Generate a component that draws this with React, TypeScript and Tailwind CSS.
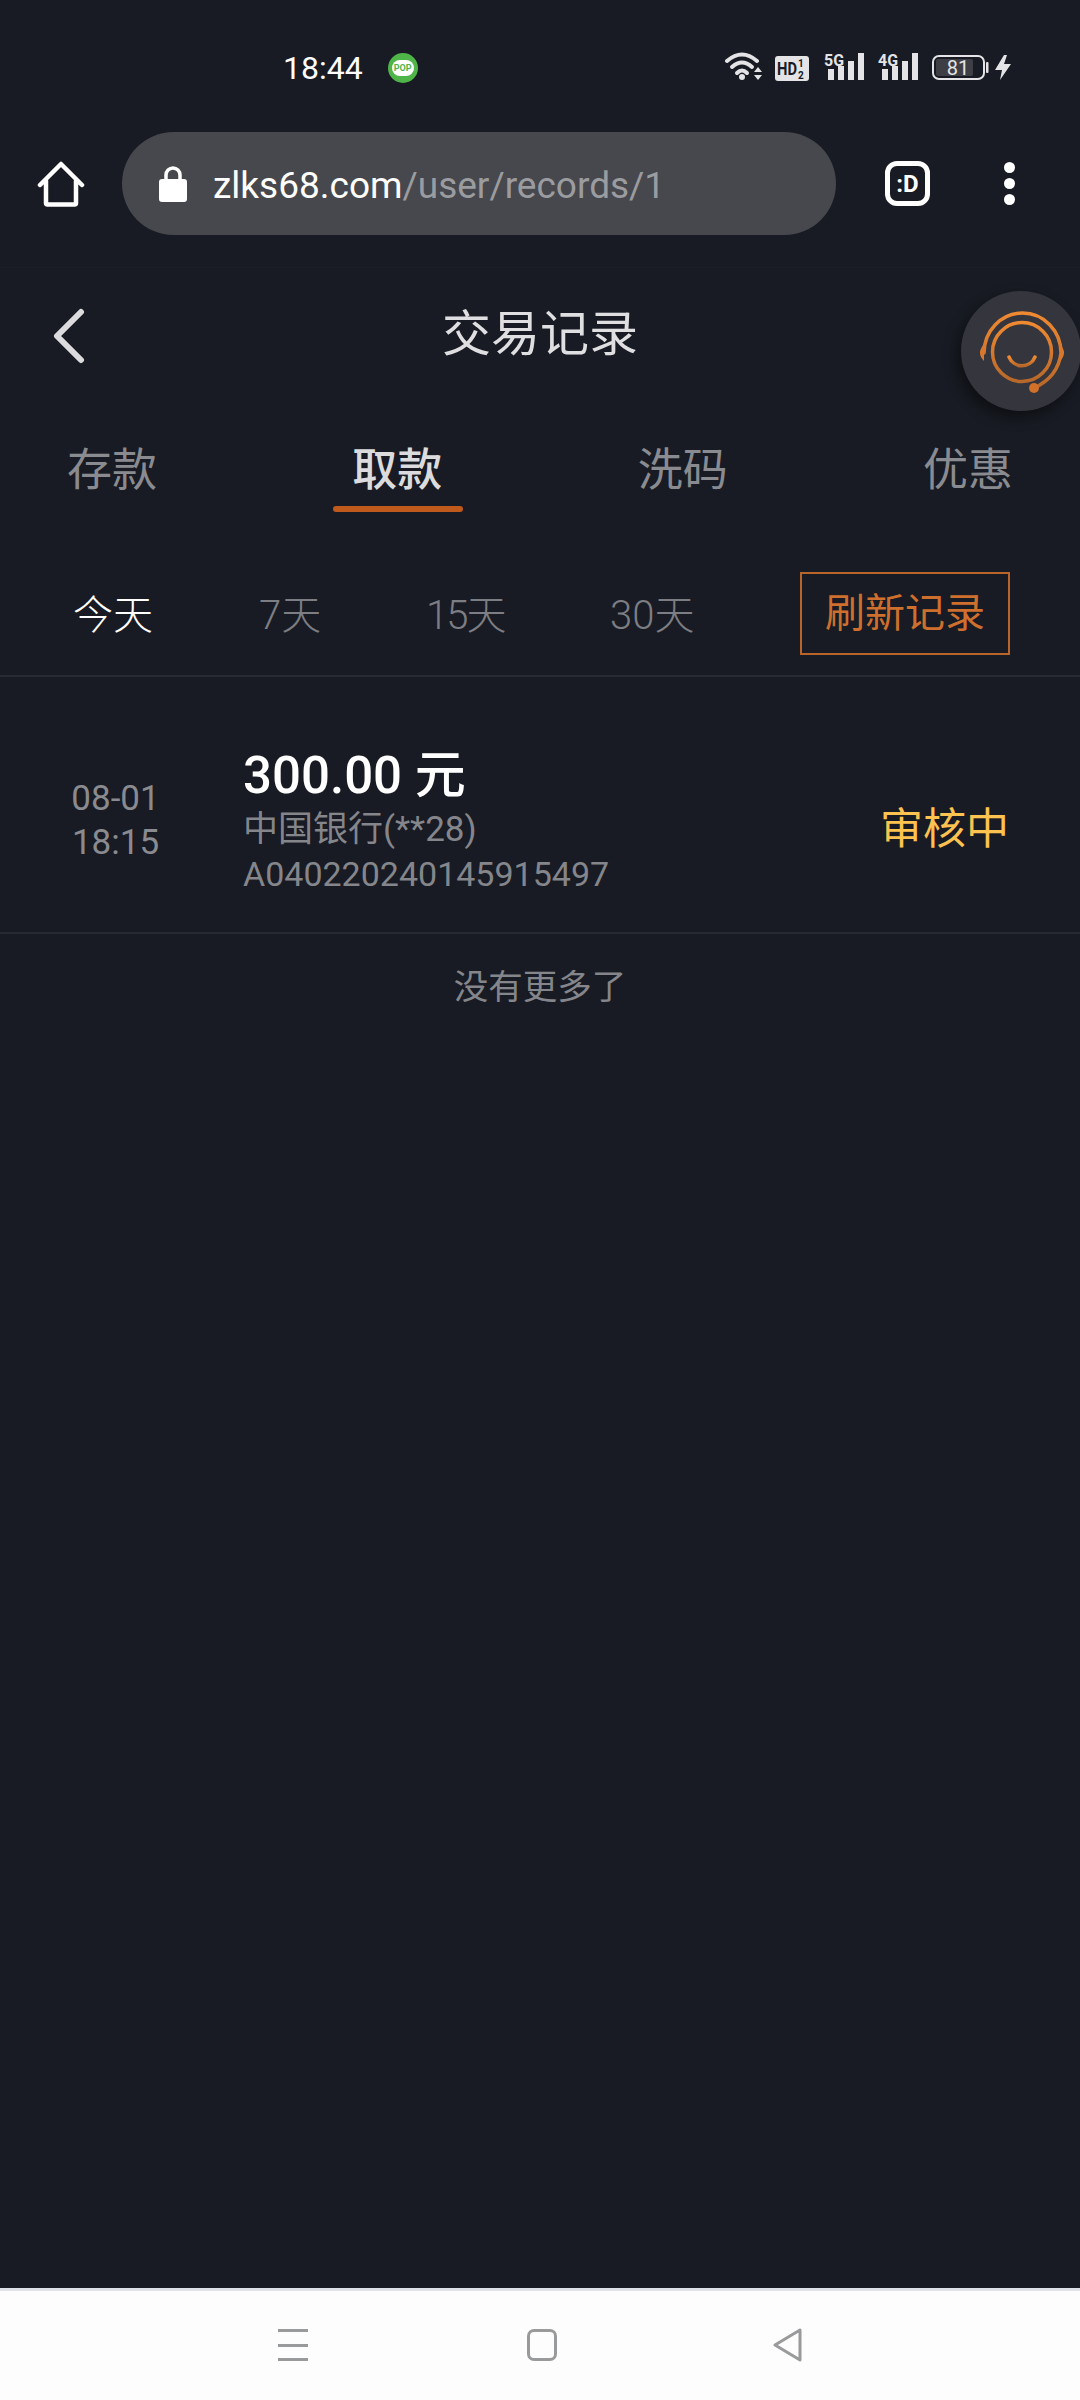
const fontStack = { fontFamily: '"Roboto", "Noto Sans CJK SC", sans-serif' };

function StatusIcons() {
  return (
    <svg width="292" height="34" viewBox="722 50 292 34" className="shrink-0">
      {/* wifi */}
      <g fill="none" stroke="#e4e4e6" strokeWidth="4" strokeLinecap="round">
        <path d="M727 61 Q742 48 757 61" />
        <path d="M732 67 Q742 58 752 67" />
        <path d="M737 73 Q742 68 747 73" />
      </g>
      <circle cx="742" cy="77" r="3" fill="#e4e4e6" />
      <path d="M754 72 L758 67 L762 72 Z M754 75 L762 75 L758 80 Z" fill="#e4e4e6" />
      {/* hd */}
      <rect x="775" y="56" width="34" height="25" rx="3" fill="#e4e4e6" />
      <text x="777" y="75" fontSize="18" fontWeight="700" fill="#181b23" fontFamily="Roboto" textLength="20" lengthAdjust="spacingAndGlyphs">HD</text>
      <text x="798" y="67" fontSize="10" fontWeight="700" fill="#181b23" fontFamily="Roboto">1</text>
      <text x="798" y="79" fontSize="10" fontWeight="700" fill="#181b23" fontFamily="Roboto">2</text>
      {/* 5g */}
      <text x="824" y="66" fontSize="16" fontWeight="700" fill="#e4e4e6" fontFamily="Roboto" textLength="20" lengthAdjust="spacingAndGlyphs">5G</text>
      <path d="M828 69h6v11h-6z M838 66h6v14h-6z M848 61h6v19h-6z M858 53h6v27h-6z" fill="#e4e4e6" />
      {/* 4g */}
      <text x="878" y="66" fontSize="16" fontWeight="700" fill="#e4e4e6" fontFamily="Roboto" textLength="20" lengthAdjust="spacingAndGlyphs">4G</text>
      <path d="M882 69h6v11h-6z M892 66h6v14h-6z M902 61h6v19h-6z M912 53h6v27h-6z" fill="#e4e4e6" />
      {/* battery */}
      <rect x="933" y="56" width="51" height="23" rx="6" fill="none" stroke="#e4e4e6" strokeWidth="2" />
      <rect x="936" y="59" width="37" height="17" rx="2" fill="#3e3f44" />
      <rect x="986" y="62" width="2.5" height="11" rx="1" fill="#e4e4e6" />
      <text x="958" y="75" fontSize="20" textAnchor="middle" fill="#e4e4e6" fontFamily="Roboto">81</text>
      <path d="M1004 55 L995 70 L1002 70 L1000 80 L1011 64 L1004 64 L1007 55 Z" fill="#e4e4e6" />
    </svg>
  );
}

function HomeIcon() {
  return (
    <svg width="48" height="48" viewBox="0 0 48 48" fill="none" stroke="#fff" strokeWidth="4.5" strokeLinejoin="round" strokeLinecap="round">
      <path d="M3 25 L24 4 L45 25 M9 21 V43 a1.5 1.5 0 0 0 1.5 1.5 H37.5 a1.5 1.5 0 0 0 1.5 -1.5 V21" />
    </svg>
  );
}

function LockIcon() {
  return (
    <svg width="28" height="36" viewBox="0 0 28 36">
      <path d="M7 15 V9 a7 7 0 0 1 14 0 V15" fill="none" stroke="#fff" strokeWidth="3.5" />
      <rect x="0" y="13" width="28" height="23" rx="3" fill="#fff" />
    </svg>
  );
}

function SupportIcon() {
  return (
    <svg width="120" height="120" viewBox="961 292 120 120" fill="none">
      <defs>
        <linearGradient id="hs" x1="0" y1="0" x2="0" y2="1">
          <stop offset="0" stopColor="#f08a32" />
          <stop offset="1" stopColor="#b8682a" />
        </linearGradient>
      </defs>
      <g stroke="url(#hs)" strokeWidth="3.5" strokeLinecap="round">
        <path d="M984 354 A38.5 40 0 0 1 1061 354 Q1058 378 1034 389" />
        <circle cx="1022" cy="353" r="29.5" />
        <path d="M1009 358 A14 14 0 0 0 1035 358" />
      </g>
      <path d="M984 345 Q976 354 984 362 Z M1060 345 Q1068 354 1060 362 Z" fill="#d9782c" />
      <circle cx="1034" cy="389" r="5" fill="#d0702a" />
    </svg>
  );
}

export default function App() {
  const tabs = ["存款", "取款", "洗码", "优惠"];
  const ranges = [
    { label: "今天", cls: "left-[73px] text-white" },
    { label: "7天", cls: "left-[259px] text-[#7d7e83]" },
    { label: "15天", cls: "left-[426px] text-[#7d7e83] tracking-[-2px]" },
    { label: "30天", cls: "left-[610px] text-[#7d7e83]" },
  ];

  return (
    <div className="relative w-[1080px] h-[2400px] overflow-hidden bg-[#181b23] flex flex-col" style={fontStack}>
      {/* status bar */}
      <div className="h-[132px] shrink-0 flex items-start pt-[50px] pl-[283px] pr-[66px]">
        <span className="text-[32px] leading-[36px] text-white">18:44</span>
        <span className="ml-[25px] mt-[3px] w-[30px] h-[30px] rounded-full bg-[#4fb548] flex items-center justify-center">
          <span className="w-[22px] h-[16px] rounded-full bg-white text-[#4fb548] text-[9px] leading-[16px] font-bold text-center">POP</span>
        </span>
        <span className="flex-1" />
        <StatusIcons />
      </div>

      {/* browser bar */}
      <div className="h-[103px] shrink-0 flex items-center pl-[37px]">
        <HomeIcon />
        <div className="ml-[37px] w-[714px] h-[103px] rounded-full bg-[#47484d] flex items-center pl-[37px]">
          <LockIcon />
          <span className="ml-[26px] mt-[3px] text-[37px] leading-none text-white whitespace-nowrap">
            zlks68.com<span className="text-[#9b9ca0]">/user/records/1</span>
          </span>
        </div>
        <div className="ml-[49px] w-[45px] h-[45px] rounded-[12px] border-[5px] border-white flex items-center justify-center text-white text-[24px] font-bold leading-none">:D</div>
        <div className="ml-[74px] flex flex-col gap-[5px]">
          <span className="w-[11px] h-[11px] rounded-full bg-white" />
          <span className="w-[11px] h-[11px] rounded-full bg-white" />
          <span className="w-[11px] h-[11px] rounded-full bg-white" />
        </div>
      </div>

      <div className="h-[33px] shrink-0 border-b border-[#1b1e26]" />

      {/* title */}
      <div className="relative h-[132px] shrink-0 flex items-center justify-center">
        <svg width="36" height="56" viewBox="0 0 36 56" className="absolute left-[51px] top-[40px]" fill="none" stroke="#dcdcde" strokeWidth="6" strokeLinecap="round" strokeLinejoin="round">
          <path d="M30 4 L6 28 L30 52" />
        </svg>
        <h1 className="text-[49px] leading-none font-normal text-[#dfdfe1]">交易记录</h1>
      </div>

      {/* tabs */}
      <div className="h-[149px] shrink-0 flex justify-between px-[67px] pt-[44px]">
        {tabs.map((t) => (
          <div key={t} className="relative w-[90px] text-center">
            <span className={t === "取款" ? "text-[45px] leading-[54px] font-medium text-[#dcdcde] whitespace-nowrap" : "text-[45px] leading-[54px] text-[#8a8b90] whitespace-nowrap"}>{t}</span>
            {t === "取款" && <span className="absolute left-[-19px] top-[62px] w-[130px] h-[6px] rounded-full bg-[#c05a1c]" />}
          </div>
        ))}
      </div>

      {/* date filter */}
      <div className="relative h-[128px] shrink-0 border-b-2 border-[#272a32]">
        {ranges.map((r) => (
          <span key={r.label} className={"absolute top-[43px] text-[40px] leading-[48px] font-light whitespace-nowrap " + r.cls}>{r.label}</span>
        ))}
        <button className="absolute left-[800px] top-[23px] w-[210px] h-[83px] border-2 border-[#b8642a] text-[#cf6f2e] text-[40px] leading-none">刷新记录</button>
      </div>

      {/* record row */}
      <div className="relative h-[257px] shrink-0 border-b-2 border-[#272a32] flex items-start">
        <div className="w-[243px] pt-[100px] pr-[12px] text-center text-[35px] leading-[44px] text-[#8a8b90]">
          <div>08-01</div>
          <div>18:15</div>
        </div>
        <div className="flex flex-col pt-[70px]">
          <div className="text-[51px] leading-[58px] font-medium text-white">300.00 元</div>
          <div className="text-[35px] leading-[50px] text-[#85868b]">中国银行(**28)</div>
          <div className="text-[34px] leading-[38px] text-[#85868b]">A040220240145915497</div>
        </div>
        <div className="absolute right-[71px] top-[127px] text-[43px] leading-[50px] text-[#fdc24f]">审核中</div>
      </div>

      <div className="pt-[31px] text-center text-[34.5px] leading-[44px] text-[#85868b]">没有更多了</div>

      <div className="flex-1" />

      {/* android nav */}
      <div className="h-[112px] shrink-0 bg-[#fdfdfe] border-t-[3px] border-[#dfe3e9] flex items-start relative">
        <div className="absolute left-[278px] top-[38px] w-[30px] h-[32px] flex flex-col justify-between">
          <span className="h-[3px] bg-[#999a9c]" />
          <span className="h-[3px] bg-[#999a9c]" />
          <span className="h-[3px] bg-[#999a9c]" />
        </div>
        <div className="absolute left-[527px] top-[38px] w-[30px] h-[32px] rounded-[7px] border-[3px] border-[#999a9c]" />
        <svg width="30" height="34" viewBox="0 0 30 34" className="absolute left-[773px] top-[37px]" fill="none" stroke="#999a9c" strokeWidth="3" strokeLinejoin="round">
          <path d="M2 17 L27 2 L27 32 Z" />
        </svg>
      </div>

      {/* floating support button */}
      <button className="absolute left-[961px] top-[291px] w-[120px] h-[120px] rounded-full bg-[#34353d] shadow-[-4px_6px_14px_rgba(0,0,0,0.45)]">
        <SupportIcon />
      </button>
    </div>
  );
}
